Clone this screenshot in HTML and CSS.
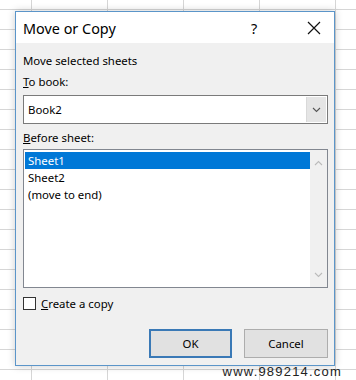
FILE: index.html
```html
<!DOCTYPE html>
<html lang="en">
<head>
    <meta charset="UTF-8">
    <title>Move or Copy</title>
    <link rel="stylesheet" href="styles.css">
</head>
<body>
    <div class="sheet">
        <div class="dialog">
            <div class="title-bar">
                <span class="title">Move or Copy</span>
                <span class="help">?</span>
                <span class="close">
                    <svg width="14" height="14" viewBox="0 0 14 14"><path d="M1 1L13 13M13 1L1 13" stroke="#111" stroke-width="1.2" fill="none"/></svg>
                </span>
            </div>

            <div class="dialog-body">
                <p class="label">Move selected sheets</p>
                <p class="label"><u>T</u>o book:</p>

                <div class="combo">
                    <span class="combo-text">Book2</span>
                    <span class="combo-btn">
                        <svg width="9" height="6" viewBox="0 0 9 6"><path d="M1 1L4.5 4.5L8 1" stroke="#555" stroke-width="1.1" fill="none"/></svg>
                    </span>
                </div>

                <p class="label label-gap"><u>B</u>efore sheet:</p>

                <div class="listbox">
                    <ul class="items">
                        <li class="selected">Sheet1</li>
                        <li>Sheet2</li>
                        <li>(move to end)</li>
                    </ul>
                    <div class="scrollbar">
                        <svg width="9" height="6" viewBox="0 0 9 6"><path d="M1 5L4.5 1.5L8 5" stroke="#bbb" stroke-width="1.1" fill="none"/></svg>
                        <svg width="9" height="6" viewBox="0 0 9 6"><path d="M1 1L4.5 4.5L8 1" stroke="#bbb" stroke-width="1.1" fill="none"/></svg>
                    </div>
                </div>

                <label class="check-row">
                    <span class="checkbox"></span>
                    <span><u>C</u>reate a copy</span>
                </label>

                <div class="buttons">
                    <button class="btn btn-default">OK</button>
                    <button class="btn">Cancel</button>
                </div>
            </div>
        </div>
    </div>
    <div class="watermark">www.989214.com</div>
</body>
</html>
```

FILE: styles.css
```css
body {
    margin: 0;
    width: 356px;
    height: 380px;
    overflow: hidden;
    font-family: "Noto Sans", "Open Sans", sans-serif;
    font-size: 11.4px;
    color: #000;
    position: relative;
    background-color: #fff;
    /* excel grid behind the dialog */
    background-image:
        repeating-linear-gradient(to right, transparent 0, transparent 31px, #d6d6d6 31px, #d6d6d6 32px, transparent 32px, transparent 76px),
        repeating-linear-gradient(to bottom, transparent 0, transparent 9px, #d6d6d6 9px, #d6d6d6 10px, transparent 10px, transparent 20px);
}

.sheet {
    padding: 11px 0 0 15px;
}

/* Dialog */
.dialog {
    width: 318px;
    height: 353px;
    border: 1px solid #5b95c9;
    background: #f0f0f0;
    box-shadow: 0 0 8px rgba(0, 0, 0, 0.2);
    display: flex;
    flex-direction: column;
}

.title-bar {
    height: 31px;
    background: #fff;
    display: flex;
    align-items: center;
    padding-left: 7px;
}

.title {
    font-size: 14.4px;
    flex: 1;
    padding-top: 2px;
}

.help {
    font-size: 14.4px;
    width: 12px;
    margin-right: 44px;
    padding-top: 2px;
}

.close {
    display: flex;
    width: 16px;
    margin-right: 11px;
}

.dialog-body {
    flex: 1;
    padding: 10px 6px 0 7px;
    display: flex;
    flex-direction: column;
}

.label {
    margin: 0 0 5px;
    line-height: 16px;
}

.label-gap {
    margin: 6px 0 3px;
}

/* Combo box */
.combo {
    height: 27px;
    background: #fff;
    border: 1px solid #7a7a7a;
    display: flex;
    align-items: stretch;
}

.combo-text {
    flex: 1;
    padding-left: 4px;
    display: flex;
    align-items: center;
}

.combo-btn {
    width: 19px;
    margin: 1px;
    background: #e5e5e5;
    border-left: 1px solid #d9d9d9;
    display: flex;
    align-items: center;
    justify-content: center;
}

/* List box */
.listbox {
    height: 137px;
    background: #fff;
    border: 1px solid #828790;
    display: flex;
}

.items {
    flex: 1;
    list-style: none;
    margin: 0;
    padding: 2px 0 0 1px;
}

.items li {
    height: 17px;
    line-height: 17px;
    padding-left: 3px;
}

.items .selected {
    background: #0078d7;
    color: #fff;
}

.scrollbar {
    width: 17px;
    background: #f0f0f0;
    display: flex;
    flex-direction: column;
    justify-content: space-between;
    align-items: center;
    padding: 10px 0 9px;
}

/* Checkbox */
.check-row {
    display: flex;
    align-items: center;
    gap: 5px;
    margin-top: 7px;
    height: 16px;
}

.checkbox {
    width: 11px;
    height: 11px;
    border: 1px solid #333;
    background: #fff;
}

/* Buttons */
.buttons {
    display: flex;
    justify-content: flex-end;
    gap: 12px;
    margin-top: 18px;
}

.btn {
    width: 84px;
    height: 29px;
    background: #e1e1e1;
    border: 1px solid #adadad;
    font-family: inherit;
    font-size: 11.4px;
    color: #000;
    padding: 0;
}

.btn-default {
    width: 83px;
    border: 2px solid #3a79b6;
}

.watermark {
    position: absolute;
    right: 14px;
    bottom: 1px;
    font-family: "Liberation Sans", sans-serif;
    font-size: 13px;
    letter-spacing: 1.2px;
    color: #222;
}
```
